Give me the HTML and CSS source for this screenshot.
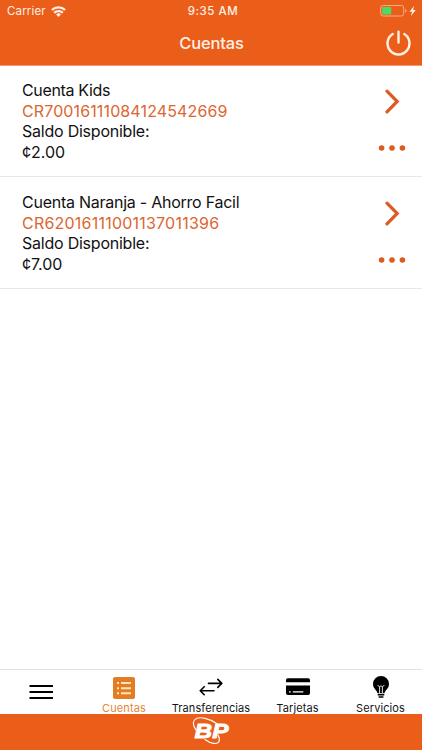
FILE: index.html
```html
<!DOCTYPE html>
<html lang="es">
<head>
<meta charset="utf-8">
<meta name="viewport" content="width=device-width, initial-scale=1">
<title>Cuentas</title>
<link rel="stylesheet" href="styles.css">
</head>
<body>
<div class="app">
  <header class="header">
    <div class="status">
      <div class="status-left">
        <span class="carrier">Carrier</span>
        <svg class="wifi" width="15" height="11" viewBox="0 0 15 11" fill="none" stroke="#fff0e6" stroke-width="2.300">
          <path d="M.9 4a9.400 9.400 0 0 1 13.200 0M3.200 6.900a6.100 6.100 0 0 1 8.600 0"/>
          <path d="M7.500 10.900 5.100 8.500a3.400 3.400 0 0 1 4.800 0z" fill="#fff0e6" stroke="none"/>
        </svg>
      </div>
      <span class="clock">9:35 AM</span>
      <div class="status-right">
        <svg width="37" height="12" viewBox="0 0 37 12">
          <rect x=".7" y=".5" width="23" height="10.500" rx="2.500" fill="none" stroke="#f7ad86"/>
          <rect x="2.200" y="2" width="9" height="7.500" rx=".8" fill="#4cd964"/>
          <path d="M25.200 4v3.600q1.400-.4 1.400-1.800T25.200 4" fill="#f7ad86"/>
          <path d="M34.200.8 29.500 6.700h2.600l-1.200 4.200 4.900-5.800h-2.700z" fill="#fff5ee"/>
        </svg>
      </div>
    </div>
    <div class="titlebar">
      <h1 class="title">Cuentas</h1>
      <svg class="power" width="26" height="26" viewBox="0 0 26 26" fill="none" stroke="#fff0e6" stroke-width="2.400" stroke-linecap="round">
        <path d="M6.700 4.100a11 11 0 1 0 11.600 0M12.500 1.600v11"/>
      </svg>
    </div>
  </header>

  <main class="accounts">
    <section class="account">
      <div class="details">
        <div><span class="name-a">Cuenta Kids</span></div>
        <div class="iban"><span class="iban-a">CR70016111084124542669</span></div>
        <div><span class="label">Saldo Disponible:</span></div>
        <div><span class="amount">¢2.00</span></div>
      </div>
      <div class="actions">
        <svg class="chevron" width="16" height="25" viewBox="0 0 16 25"><path d="m3 2.200 10.200 10.300L3 22.800" fill="none" stroke="#dd5a20" stroke-width="3.200" stroke-linecap="round"/></svg>
        <svg class="dots" width="28" height="6" viewBox="0 0 28 6" fill="#dd5a20"><circle cx="3.600" cy="3" r="2.800"/><circle cx="14" cy="3" r="2.800"/><circle cx="24.400" cy="3" r="2.800"/></svg>
      </div>
    </section>
    <section class="account">
      <div class="details">
        <div><span class="name-b">Cuenta Naranja - Ahorro Facil</span></div>
        <div class="iban"><span class="iban-b">CR62016111001137011396</span></div>
        <div><span class="label">Saldo Disponible:</span></div>
        <div><span class="amount">¢7.00</span></div>
      </div>
      <div class="actions">
        <svg class="chevron" width="16" height="25" viewBox="0 0 16 25"><path d="m3 2.200 10.200 10.300L3 22.800" fill="none" stroke="#dd5a20" stroke-width="3.200" stroke-linecap="round"/></svg>
        <svg class="dots" width="28" height="6" viewBox="0 0 28 6" fill="#dd5a20"><circle cx="3.600" cy="3" r="2.800"/><circle cx="14" cy="3" r="2.800"/><circle cx="24.400" cy="3" r="2.800"/></svg>
      </div>
    </section>
  </main>

  <nav class="tabs">
    <div class="tab menu">
      <svg width="24" height="16" viewBox="0 0 24 16" stroke="#000" stroke-width="2"><path d="M.5 2H24M.5 8H24M.5 14H24"/></svg>
    </div>
    <div class="tab active">
      <svg class="icon" width="22" height="22" viewBox="0 0 22 22"><rect width="22" height="22" rx="2" fill="#e37c22"/><path d="M4 6h2m2 0h10M4 11.200h2m2 0h10M4 16.200h2m2 0h10" stroke="#ffe5bd" stroke-width="2"/></svg>
      <span class="tab-label">Cuentas</span>
    </div>
    <div class="tab">
      <svg class="icon" width="24" height="22" viewBox="0 0 24 22" fill="none" stroke="#000" stroke-width="1.600" stroke-linecap="round" stroke-linejoin="round"><path d="M9.500 6.400h13.300M18.800 2.400l4 4-4 4M15 13.700H1.200M5.200 9.700l-4 4 4 4"/></svg>
      <span class="tab-label">Transferencias</span>
    </div>
    <div class="tab">
      <svg class="icon" width="24" height="22" viewBox="0 0 24 22"><path d="M0 5.200V3q0-1.800 1.800-1.800h20.400Q24 1.200 24 3v2.200zM0 8.500h24v7.700q0 1.800-1.800 1.800H1.800Q0 18 0 16.200z" fill="#000"/><path d="M3 14.800h1.700m2.100 0h10.500" stroke="#fff" stroke-width="1.300"/></svg>
      <span class="tab-label">Tarjetas</span>
    </div>
    <div class="tab bulb">
      <svg class="icon" width="18" height="24" viewBox="0 0 18 24"><path d="M9 .1a7.900 7.900 0 0 0-8 7.800c0 4.700 3.700 5.600 4.500 9.300h7c.8-3.700 4.500-4.600 4.500-9.300A7.900 7.900 0 0 0 9 .1z" fill="#000"/><path d="m5.600 9 2 2v6.200M12.400 9l-2 2v6.200M7.600 11 9 9.600l1.400 1.400" fill="none" stroke="#fff" stroke-width=".9"/><path d="M5.700 18.800h6.600M6.600 21h4.800" stroke="#000" stroke-width="1.400"/></svg>
      <span class="tab-label">Servicios</span>
    </div>
  </nav>

  <footer class="footer">
    <svg class="logo" width="40" height="30" viewBox="0 0 40 30">
      <g fill="none" stroke="#fff" stroke-linecap="round">
        <path d="M5 14C-1 5 4 .2 14 2.400c5.500 1.200 9 3 12 5.400" stroke-width="1.100"/>
        <path d="M14 23.500c6 4.500 12.500 5.200 14 2 .8-1.900.3-4-1-6.500" stroke-width="1.200"/>
      </g>
      <text class="logo-text" x="3.500" y="22" textLength="34" lengthAdjust="spacingAndGlyphs">BP</text>
    </svg>
  </footer>
</div>
</body>
</html>
```
FILE: styles.css
```css
* { box-sizing: border-box; }
body { margin: 0; font-family: Inter, "Liberation Sans", sans-serif; background: #fff; }
.app { width: 422px; height: 750px; display: flex; flex-direction: column; overflow: hidden; }
.header { height: 66px; flex: none; background: #eb5e1a; border-bottom: 1px solid #f39a6d; color: #fff0e6; }
.status { height: 22px; display: grid; grid-template-columns: 1fr auto 1fr; align-items: center; padding: 0 5px 0 7px; font-size: 11.500px; }
.status-left { display: flex; align-items: center; gap: 5px; }
.carrier { letter-spacing: .15px; }
.clock { font-weight: 500; letter-spacing: .5px; padding-left: 2px; }
.status-right { display: flex; justify-content: flex-end; }
.titlebar { height: 42px; display: grid; grid-template-columns: 1fr auto 1fr; align-items: center; padding: 0 10px 0 11px; }
.title { grid-column: 2; margin: 0; font-size: 16.500px; font-weight: 500; letter-spacing: -.15px; }
.power { justify-self: end; }
.accounts { flex: 1; }
.account { height: 112px; border-bottom: 1px solid #e7e7e7; padding: 14px 15px 0 22px; display: flex; justify-content: space-between; }
.account:first-child { height: 111px; }
.account + .account { padding-top: 15px; }
.details { font-size: 16px; line-height: 20.400px; color: #111; white-space: nowrap; }
.account .details { padding-top: .3px; }
.name-a { letter-spacing: -.35px; }
.name-b { letter-spacing: -.25px; }
.label { letter-spacing: -.23px; }
.amount { letter-spacing: -.05px; }
.iban { color: #dd6530; }
.iban-a { letter-spacing: .12px; }
.iban-b { letter-spacing: .22px; }
.actions { width: 30px; display: flex; flex-direction: column; align-items: center; padding-top: 8.500px; gap: 31px; }
.tabs { flex: none; height: 45px; display: grid; grid-template-columns: 82px 84px 90px 83px 83px; border-top: 1px solid #e2e2e2; overflow: hidden; }
.tab { display: flex; flex-direction: column; align-items: center; padding-top: 7px; color: #151515; }
.menu { padding-top: 14px; }
.bulb { padding-top: 6px; }
.active { margin-top: -1px; border-top: 1px solid #e99568; color: #e48735; }
.icon { flex: none; }
.tab-label { margin-top: auto; font-size: 11px; line-height: 12px; letter-spacing: .1px; white-space: nowrap; }
.footer { flex: none; height: 36px; background: #eb5e1a; display: flex; justify-content: center; padding-top: 2px; }
.logo-text { font: italic 700 21px "Liberation Sans", sans-serif; fill: #fff; stroke: #fff; stroke-width: .8px; }
```
